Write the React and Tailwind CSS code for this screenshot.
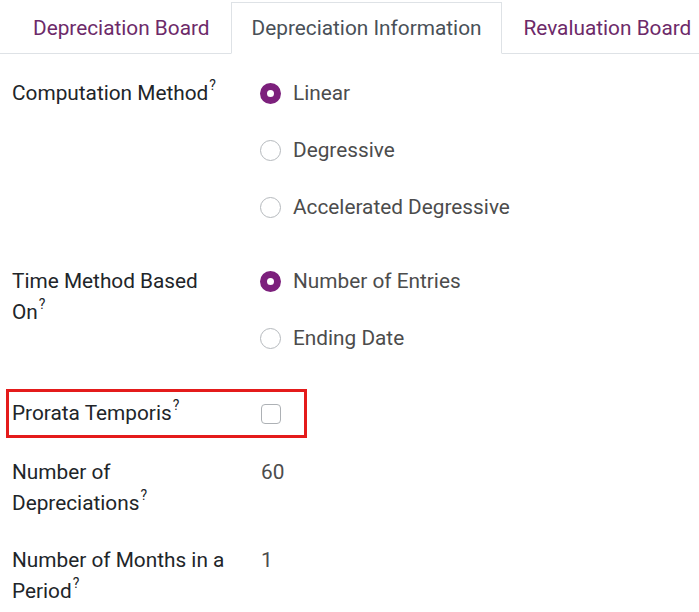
const tabs = [
  { label: "Depreciation Board" },
  { label: "Depreciation Information", active: true },
  { label: "Revaluation Board" },
];

const Help = () => (
  <sup className="text-[14px] leading-none ml-px relative -top-[10px] align-baseline">?</sup>
);

const Radio = ({ checked, label }) => (
  <div className="flex items-center h-[31px]">
    {checked ? (
      <span className="w-[21px] h-[21px] rounded-full border-[7px] border-[#7c207c] bg-white shrink-0" />
    ) : (
      <span className="w-[21px] h-[21px] rounded-full border border-[#b5b9bd] bg-white shrink-0" />
    )}
    <span className="ml-3 text-[#4c4c4c] whitespace-nowrap">{label}</span>
  </div>
);

const Row = ({ label, children, className = "" }) => (
  <div className={`grid grid-cols-[248px_1fr] pl-3 relative ${className}`}>
    <div className="text-[#212529] pr-[26px]">{label}</div>
    <div>{children}</div>
  </div>
);

const App = () => {
  return (
    <div className="w-[699px] h-[612px] bg-white overflow-hidden font-['Roboto','Liberation_Sans',sans-serif] text-[20.8px] leading-[31px]">
      <div className="flex h-[54px] border-b border-[#dee2e6] pl-3 pt-[2px]">
        {tabs.map((t) => (
          <div
            key={t.label}
            className={
              t.active
                ? "px-5 flex items-center border border-[#dee2e6] border-b-white bg-white -mb-px text-[#495057] whitespace-nowrap"
                : "px-5 flex items-center border border-transparent -mb-px text-[#6d2a69] whitespace-nowrap"
            }
          >
            {t.label}
          </div>
        ))}
      </div>

      <div className="pt-6">
        <Row
          className="mb-[43px]"
          label={
            <>
              Computation Method<Help />
            </>
          }
        >
          <div className="flex flex-col gap-[26px]">
            <Radio checked label="Linear" />
            <Radio label="Degressive" />
            <Radio label="Accelerated Degressive" />
          </div>
        </Row>

        <Row
          className="mb-[44px]"
          label={
            <>
              Time Method Based On<Help />
            </>
          }
        >
          <div className="flex flex-col gap-[26px]">
            <Radio checked label="Number of Entries" />
            <Radio label="Ending Date" />
          </div>
        </Row>

        <Row
          className="mb-[28px]"
          label={
            <>
              Prorata Temporis<Help />
            </>
          }
        >
          <div className="h-[31px] flex items-center">
            <span className="w-5 h-5 ml-px rounded-[4px] border border-[#adb1b5] bg-white" />
          </div>
          <div className="absolute left-[6px] -top-[9px] w-[301px] h-[49px] border-[3px] border-[#e41b1b]" />
        </Row>

        <Row
          className="mb-[26px]"
          label={
            <>
              Number of Depreciations<Help />
            </>
          }
        >
          <div className="text-[#4c4c4c] pl-px">60</div>
        </Row>

        <Row
          label={
            <>
              Number of Months in a Period<Help />
            </>
          }
        >
          <div className="text-[#4c4c4c] pl-px">1</div>
        </Row>
      </div>
    </div>
  );
};

export default App;
